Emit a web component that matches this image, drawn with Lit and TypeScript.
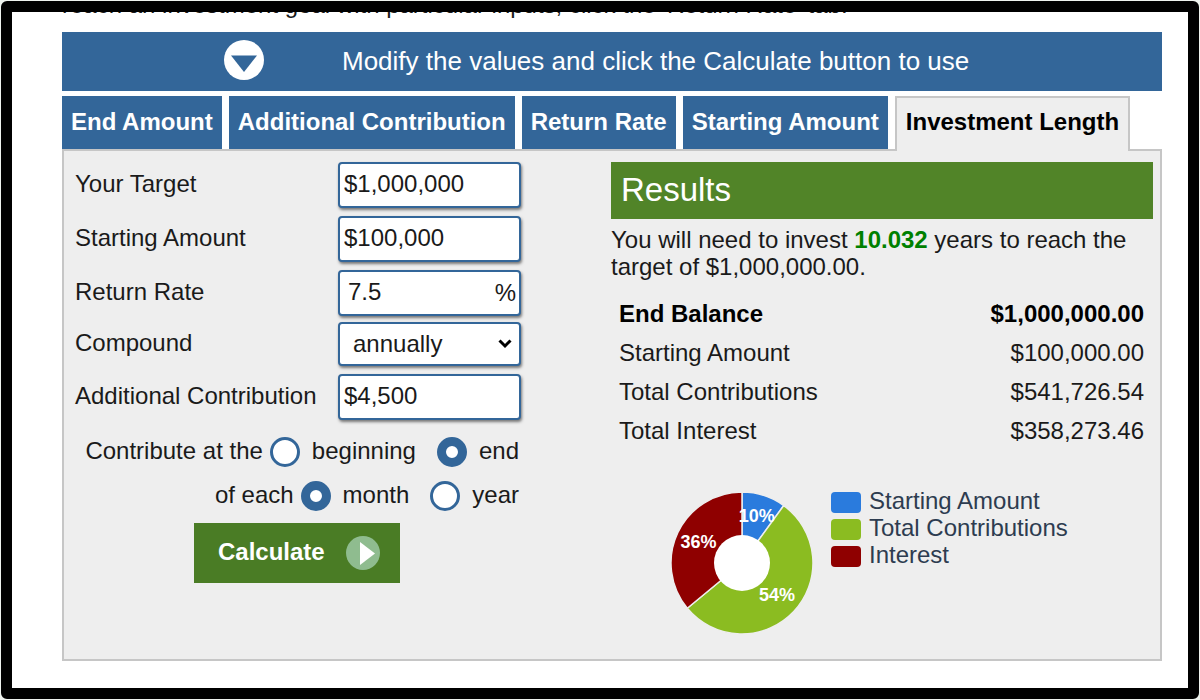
import { LitElement, html, css, svg } from "lit";
import { customElement, state } from "lit/decorators.js";

interface Slice {
  name: string;
  percent: number;
  color: string;
}

const SLICES: Slice[] = [
  { name: "Starting Amount", percent: 10, color: "#2a7bdd" },
  { name: "Total Contributions", percent: 54, color: "#8bbc21" },
  { name: "Interest", percent: 36, color: "#8f0000" },
];

const RESULTS: [string, string][] = [
  ["End Balance", "$1,000,000.00"],
  ["Starting Amount", "$100,000.00"],
  ["Total Contributions", "$541,726.54"],
  ["Total Interest", "$358,273.46"],
];

const TABS = [
  "End Amount",
  "Additional Contribution",
  "Return Rate",
  "Starting Amount",
  "Investment Length",
];

@customElement("balance-chart")
export class BalanceChart extends LitElement {
  static styles = css`
    :host {
      display: flex;
      align-items: flex-start;
      gap: 17px;
    }
    .donut {
      display: block;
      flex: none;
      margin-top: 4px;
    }
    .percent {
      font: bold 18px "Liberation Sans", Arial, sans-serif;
      fill: #fff;
      text-anchor: middle;
    }
    .legend {
      list-style: none;
      margin: 0;
      padding: 0;
      color: #2d3c50;
      font-size: 24px;
      line-height: 27px;
    }
    .item {
      display: flex;
      align-items: flex-start;
      gap: 8px;
      height: 27px;
    }
    .swatch {
      width: 30px;
      height: 21px;
      border-radius: 4px;
      margin-top: 5px;
    }
  `;

  private slices() {
    const c = 72;
    const r = 71;
    let total = 0;
    return SLICES.map((s) => {
      const from = (total / 100) * Math.PI * 2;
      total += s.percent;
      const to = (total / 100) * Math.PI * 2;
      const mid = (from + to) / 2;
      const at = (a: number, d: number) =>
        `${(c + Math.sin(a) * d).toFixed(2)} ${(c - Math.cos(a) * d).toFixed(2)}`;
      const [tx, ty] = at(mid, 48).split(" ");
      const large = s.percent > 50 ? 1 : 0;
      return {
        shape: svg`<path d="M${c} ${c} L${at(from, r)} A${r} ${r} 0 ${large} 1 ${at(to, r)} Z"
          fill=${s.color} stroke="#eee" stroke-width="1.5" stroke-linejoin="round"></path>`,
        label: svg`<text class="percent" x=${tx} y=${Number(ty) + 5}>${s.percent}%</text>`,
      };
    });
  }

  render() {
    const parts = this.slices();
    return html`
      <svg class="donut" width="144" height="144" viewBox="0 0 144 144" role="img" aria-label="Balance breakdown">
        ${parts.map((p) => p.shape)}
        <circle cx="72" cy="72" r="28" fill="#fff"></circle>
        ${parts.map((p) => p.label)}
      </svg>
      <ul class="legend">
        ${SLICES.map(
          (s) => html`<li class="item">
            <span class="swatch" style="background:${s.color}"></span>
            <span>${s.name}</span>
          </li>`
        )}
      </ul>
    `;
  }
}

@customElement("app-root")
export class AppRoot extends LitElement {
  @state() private active = "Investment Length";

  static styles = css`
    :host {
      display: block;
      box-sizing: border-box;
      min-height: 100vh;
      padding: 1px;
      background: #eef3ee;
      color: #1a1a1a;
      font: 24px/27px "Liberation Sans", Arial, Helvetica, sans-serif;
    }
    * {
      box-sizing: border-box;
    }
    .frame {
      display: flex;
      flex-direction: column;
      min-height: calc(100vh - 2px);
      padding: 0 26px 27px 50px;
      border: 11px solid #000;
      border-radius: 6px;
      background: #fff;
    }
    .intro {
      display: flex;
      align-items: flex-end;
      height: 6px;
      margin: 0 0 14px;
      overflow: hidden;
      white-space: nowrap;
    }
    .banner {
      display: flex;
      align-items: center;
      gap: 78px;
      height: 59px;
      padding-left: 162px;
      background: #336699;
      color: #fff;
      font-size: 26px;
    }
    .arrow {
      flex: none;
      margin-top: -4px;
    }
    .tabs {
      display: flex;
      gap: 7px;
      margin-top: 5px;
    }
    .tab {
      height: 53px;
      padding: 0 9px 2px;
      border: 0;
      background: #336699;
      color: #fff;
      font: inherit;
      font-weight: bold;
      white-space: nowrap;
    }
    .tab.active {
      position: relative;
      height: 55px;
      margin-bottom: -2px;
      padding-bottom: 6px;
      border: 2px solid #c6c6c6;
      border-bottom: 0;
      background: #eee;
      color: #000;
    }
    .panel {
      display: grid;
      grid-template-columns: 446px 1fr;
      gap: 90px;
      flex: 1;
      padding: 7px 7px 7px 11px;
      border: 2px solid #c6c6c6;
      background: #eee;
    }
    .row {
      display: flex;
      align-items: center;
      justify-content: space-between;
      height: 54px;
    }
    .row.compact {
      height: 50px;
      padding-bottom: 2px;
    }
    .row label,
    .caption {
      padding-bottom: 3px;
    }
    .control {
      position: relative;
      width: 183px;
    }
    .field {
      display: block;
      width: 100%;
      height: 46px;
      margin: 0;
      padding: 0 4px 2px;
      border: 2px solid #336699;
      border-radius: 4px;
      background: #fff;
      box-shadow: 1px 2px 3px #777;
      color: #1a1a1a;
      font: inherit;
      appearance: none;
    }
    .field.rate {
      padding-left: 8px;
    }
    .field.choice {
      height: 44px;
      padding-left: 13px;
    }
    .suffix {
      position: absolute;
      top: 9px;
      right: 5px;
    }
    .chevron {
      position: absolute;
      top: 17px;
      right: 9px;
      pointer-events: none;
    }
    .choices {
      display: flex;
      align-items: center;
      justify-content: flex-end;
      height: 44px;
      margin: 0;
      padding: 0 2px 0 0;
      border: 0;
    }
    .timing {
      margin-top: 6px;
    }
    .option {
      display: flex;
      align-items: center;
      gap: 12px;
      margin-left: 21px;
    }
    .option.first {
      margin-left: 7px;
    }
    .radio {
      width: 30px;
      height: 30px;
      margin: 0;
      border: 3px solid #336699;
      border-radius: 50%;
      background: #fff;
      appearance: none;
    }
    .radio:checked {
      border-width: 9px;
    }
    .calculate {
      display: flex;
      align-items: center;
      justify-content: space-between;
      width: 206px;
      height: 60px;
      margin: 5px 0 0 119px;
      padding: 0 20px 0 24px;
      border: 0;
      background: #4a7c25;
      color: #fff;
      font: inherit;
      font-weight: bold;
    }
    .results {
      padding-top: 4px;
    }
    .title {
      margin: 0;
      padding: 0 10px 2px;
      background: #518428;
      color: #fff;
      font-size: 33px;
      font-weight: normal;
      line-height: 55px;
    }
    .summary {
      margin: 7px 0 14px;
    }
    .years {
      color: #008000;
    }
    .table {
      width: 100%;
      border-collapse: collapse;
    }
    .table th,
    .table td {
      height: 39px;
      padding: 0 9px 0 8px;
      font-weight: normal;
      text-align: left;
    }
    .table td {
      text-align: right;
    }
    .table .total th,
    .table .total td {
      color: #000;
      font-weight: bold;
    }
    .chart {
      margin: 37px 0 0 59px;
    }
  `;

  private moneyRow(id: string, label: string, value: string) {
    return html`<div class="row">
      <label for=${id}>${label}</label>
      <div class="control"><input class="field" id=${id} type="text" .value=${value} /></div>
    </div>`;
  }

  private radio(group: string, label: string, checked: boolean, first: boolean) {
    return html`<label class="option ${first ? "first" : ""}">
      <input class="radio" type="radio" name=${group} value=${label} ?checked=${checked} />
      <span class="caption">${label}</span>
    </label>`;
  }

  render() {
    return html`
      <main class="frame">
        <p class="intro">reach an investment goal with particular inputs, click the 'Return Rate' tab.</p>
        <div class="banner">
          <svg class="arrow" width="40" height="40" viewBox="0 0 40 40" aria-hidden="true">
            <circle cx="20" cy="20" r="20" fill="#fff"></circle>
            <path d="M7 15.500H33L20 32Z" fill="#336699"></path>
          </svg>
          <span>Modify the values and click the Calculate button to use</span>
        </div>
        <div class="tabs" role="tablist">
          ${TABS.map(
            (t) => html`<button
              class="tab ${t === this.active ? "active" : ""}"
              type="button"
              role="tab"
              aria-selected=${t === this.active ? "true" : "false"}
              @click=${() => (this.active = t)}
            >${t}</button>`
          )}
        </div>
        <div class="panel">
          <form class="form" @submit=${(e: Event) => e.preventDefault()}>
            ${this.moneyRow("target", "Your Target", "$1,000,000")}
            ${this.moneyRow("starting", "Starting Amount", "$100,000")}
            <div class="row">
              <label for="rate">Return Rate</label>
              <div class="control">
                <input class="field rate" id="rate" type="text" .value=${"7.5"} />
                <span class="suffix">%</span>
              </div>
            </div>
            <div class="row compact">
              <label for="compound">Compound</label>
              <div class="control">
                <select class="field choice" id="compound">
                  <option>annually</option>
                </select>
                <svg class="chevron" width="14" height="10" viewBox="0 0 14 10" aria-hidden="true">
                  <path d="M1.500 1.500 7 7 12.500 1.500" fill="none" stroke="#000" stroke-width="3"></path>
                </svg>
              </div>
            </div>
            ${this.moneyRow("addition", "Additional Contribution", "$4,500")}
            <div class="choices timing" role="radiogroup" aria-label="Contribute at the">
              <span class="caption">Contribute at the</span>
              ${this.radio("timing", "beginning", false, true)}
              ${this.radio("timing", "end", true, false)}
            </div>
            <div class="choices" role="radiogroup" aria-label="of each">
              <span class="caption">of each</span>
              ${this.radio("period", "month", true, true)}
              ${this.radio("period", "year", false, false)}
            </div>
            <button class="calculate" type="submit">
              <span class="caption">Calculate</span>
              <svg width="34" height="34" viewBox="0 0 34 34" aria-hidden="true">
                <circle cx="17" cy="17" r="17" fill="#8fbc8f"></circle>
                <path d="M14 6 29 17.500 14 29Z" fill="#fff"></path>
              </svg>
            </button>
          </form>
          <section class="results">
            <h2 class="title">Results</h2>
            <p class="summary">
              You will need to invest <b class="years">10.032</b> years to reach the target of $1,000,000.00.
            </p>
            <table class="table">
              <tbody>
                ${RESULTS.map(
                  ([name, amount], i) => html`<tr class=${i === 0 ? "total" : ""}>
                    <th scope="row">${name}</th>
                    <td>${amount}</td>
                  </tr>`
                )}
              </tbody>
            </table>
            <balance-chart class="chart"></balance-chart>
          </section>
        </div>
      </main>
    `;
  }
}
